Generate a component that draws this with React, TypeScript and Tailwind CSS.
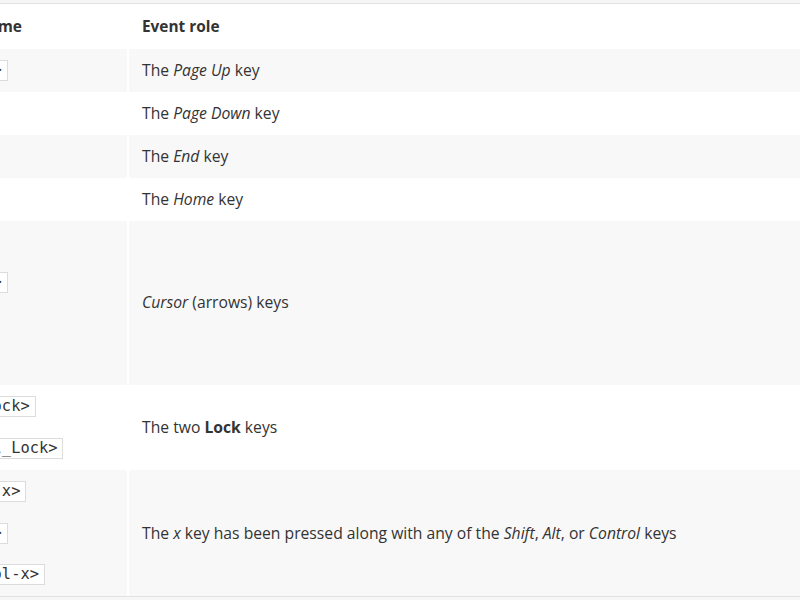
import { useLayoutEffect, useRef } from 'react';

type Row = { names: string[]; gap?: string; role: React.ReactNode };

const rows: Row[] = [
  { names: ['<Prior>'], role: <>The <em>Page Up</em> key</> },
  { names: ['<Next>'], role: <>The <em>Page Down</em> key</> },
  { names: ['<End>'], role: <>The <em>End</em> key</> },
  { names: ['<Home>'], role: <>The <em>Home</em> key</> },
  {
    names: ['<Up>', '<Right>', '<Down>', '<Left>'],
    gap: 'gap-[19.5px]',
    role: <><em>Cursor</em> (arrows) keys</>,
  },
  { names: ['<Num_Lock>', '<Scroll_Lock>'], gap: 'gap-[21px]', role: <>The two <strong>Lock</strong> keys</> },
  {
    names: ['<Shift-x>', '<Alt-x>', '<Control-x>'],
    gap: 'gap-[20.5px]',
    role: (
      <>
        The <em>x</em> key has been pressed along with any of the <em>Shift</em>, <em>Alt</em>, or{' '}
        <em>Control</em> keys
      </>
    ),
  },
];

export default function App() {
  // the table sits in a horizontally scrolled box, scrolled a bit to the right
  const scroller = useRef<HTMLDivElement>(null);
  useLayoutEffect(() => {
    if (scroller.current) scroller.current.scrollLeft = 81;
  }, []);

  return (
    <div className="w-[800px] h-[600px] bg-[#f6f6f6] pt-[3px] font-['Open_Sans',sans-serif] text-[15.7px] text-[#333]">
      <div ref={scroller} className="overflow-hidden border-y border-[#e1e1e1] bg-white">
        <table className="w-[1000px] border-collapse text-left">
          <thead>
            <tr>
              <th className="w-[209px] px-3 h-[44.5px] pt-[1px] font-bold text-[15.4px] border-r-2 border-white">Event name</th>
              <th className="pl-[13px] pr-3 h-[44.5px] pt-[1px] font-bold text-[15.4px]">Event role</th>
            </tr>
          </thead>
          <tbody>
            {rows.map((r, i) => (
              <tr key={i} className={i % 2 === 0 ? 'bg-[#f8f8f8]' : 'bg-white'}>
                <td className="px-3 py-[11px] align-middle border-r-2 border-white">
                  <div className={`flex flex-col ${r.gap ?? ''}`}>
                    {r.names.map((n) => (
                      <div key={n} className="h-[21px] flex items-center">
                        <code className="font-['DejaVu_Sans_Mono',monospace] text-[15.4px] leading-[19px] bg-white border border-[#dcdcdc] px-[5px]">
                          {n}
                        </code>
                      </div>
                    ))}
                  </div>
                </td>
                <td className="pl-[13px] pr-3 py-[11px] align-middle leading-[21px]">{r.role}</td>
              </tr>
            ))}
          </tbody>
        </table>
      </div>
    </div>
  );
}
